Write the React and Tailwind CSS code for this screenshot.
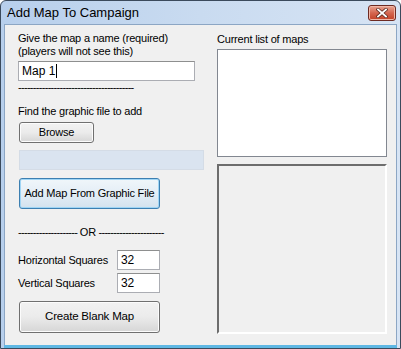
import React from 'react';

const font = { fontFamily: '"Liberation Sans", Arial, sans-serif' };

const WinButton = ({ children, className = '', focused = false }) => (
  <div
    className={`flex items-center justify-center whitespace-nowrap rounded-[3px] border text-black ${
      focused
        ? 'border-[#3c7fb1] bg-gradient-to-b from-[#f0f6fa] via-[#e4eef6] to-[#d3e2ee] shadow-[inset_0_0_0_1px_#9fd5f5]'
        : 'border-[#707070] bg-gradient-to-b from-[#f2f2f2] via-[#ebebeb] to-[#d6d6d6] shadow-[inset_0_0_0_1px_#fcfcfc]'
    } ${className}`}
  >
    {children}
  </div>
);

const TextBox = ({ value, className = '', caret = false }) => (
  <div
    className={`flex items-center border border-[#abadb3] border-t-[#8e8f8f] bg-white px-[3px] text-[12px] text-black ${className}`}
  >
    <span>{value}</span>
    {caret && <span className="ml-px inline-block h-[14px] w-px bg-black" />}
  </div>
);

const App = () => {
  return (
    <div style={font} className="h-[349px] w-[401px] overflow-hidden bg-white">
      <div className="flex h-[349px] w-[401px] flex-col rounded-t-[6px] border border-[#3b4a5c] bg-gradient-to-r from-[#b7cfec] via-[#c9dbf0] to-[#d7e4f4]">
        {/* Title bar */}
        <div className="flex h-[23px] shrink-0 items-center justify-between pl-[6px] pr-[4px]">
          <span className="text-[13px] text-black">Add Map To Campaign</span>
          <div className="flex h-[16px] w-[28px] items-center justify-center rounded-[3px] border border-[#6d2a22] bg-gradient-to-b from-[#e8a493] via-[#d4664f] to-[#c23f24] shadow-[inset_0_0_0_1px_#f0b8a8]">
            <svg width="12" height="10" viewBox="0 0 12 10">
              <path d="M2 1.5 L10 8.5 M10 1.5 L2 8.5" stroke="#5a2a20" strokeWidth="3.4" strokeLinecap="square" />
              <path d="M2 1.5 L10 8.5 M10 1.5 L2 8.5" stroke="#ffffff" strokeWidth="1.8" strokeLinecap="square" />
            </svg>
          </div>
        </div>

        {/* Client area */}
        <div className="mx-[3px] flex flex-1 border border-[#8ca6c4] border-b-0 bg-[#f0f0f0] text-[11px] tracking-[-0.2px] text-black">
          {/* Left column */}
          <div className="ml-[13px] flex w-[186px] flex-col">
            <div className="mt-[7px] leading-[13px]">
              <div>Give the map a name (required)</div>
              <div>(players will not see this)</div>
            </div>
            <TextBox value="Map 1" caret className="mt-[3px] h-[20px] w-[177px] tracking-normal" />
            <div className="mt-0 whitespace-nowrap leading-[13px] tracking-[-0.7px]">
              ---------------------------------------
            </div>
            <div className="mt-[11px] leading-[13px]">Find the graphic file to add</div>
            <WinButton className="ml-px mt-[4px] h-[21px] w-[75px] text-[11px]">Browse</WinButton>
            <div className="ml-px mt-[7px] h-[20px] w-[185px] border border-[#d4dce6] bg-[#dae4f0]" />
            <WinButton focused className="ml-px mt-[8px] h-[31px] w-[141px] text-[11px]">
              Add Map From Graphic File
            </WinButton>
            <div className="mt-[17px] whitespace-nowrap leading-[13px] tracking-[-0.7px]">
              -------------------- <span className="tracking-normal">OR</span> ----------------------
            </div>
            <div className="mt-[11px] flex items-center">
              <span className="w-[99px]">Horizontal Squares</span>
              <TextBox value="32" className="h-[20px] w-[43px]" />
            </div>
            <div className="mt-[3px] flex items-center">
              <span className="w-[99px]">Vertical Squares</span>
              <TextBox value="32" className="h-[20px] w-[43px]" />
            </div>
            <WinButton className="ml-px mt-[8px] h-[32px] w-[141px] text-[11.5px]">Create Blank Map</WinButton>
          </div>

          {/* Right column */}
          <div className="ml-[13px] flex w-[170px] flex-col">
            <div className="mt-[8px] leading-[13px]">Current list of maps</div>
            <div className="mt-[3px] h-[108px] w-[170px] border border-[#828790] bg-white" />
            <div className="mt-[7px] h-[170px] w-[170px] border-2 border-[#a0a0a0] border-b-white border-l-[#6d6d6d] border-r-white border-t-[#6d6d6d] bg-[#f0f0f0]" />
          </div>
        </div>

        {/* Bottom frame */}
        <div className="mx-[3px] h-[3px] shrink-0 bg-[#5fb8e4]" />
      </div>
    </div>
  );
};

export default App;
